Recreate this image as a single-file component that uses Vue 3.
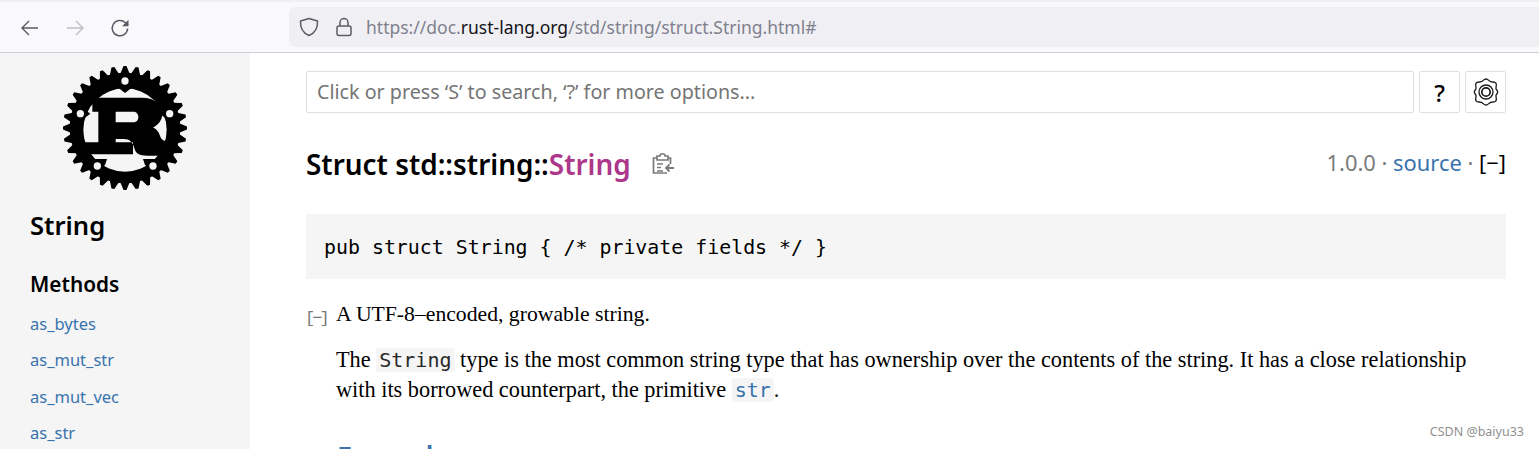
<script setup>
const methods = ['as_bytes', 'as_mut_str', 'as_mut_vec', 'as_str']
const cx = 226, cy = 219, teeth = 32
let d = ''
for (let i = 0; i < teeth; i++) {
  const a = (i / teeth) * Math.PI * 2 - Math.PI / 2
  const step = (Math.PI * 2) / teeth
  const pts = [[a - step * 0.5, 160], [a - step * 0.12, 186], [a + step * 0.12, 186]]
  for (const [t, r] of pts) {
    d += `${i === 0 && t === pts[0][0] ? 'M' : 'L'}${(cx + r * Math.cos(t)).toFixed(1)} ${(cy + r * Math.sin(t)).toFixed(1)}`
  }
}
d += 'Z'
const holes = [[226, 78], [92, 176], [360, 176], [143, 333], [310, 333]]
</script>

<template>
  <div class="page">
    <header class="browser">
      <div class="topstrip"></div>
      <div class="navrow">
        <div class="navbtns">
          <svg class="nav" viewBox="0 0 20 20" width="20" height="20"><path d="M18 10H2M9 3l-7 7 7 7" fill="none" stroke="#5b5b66" stroke-width="1.4"/></svg>
          <svg class="nav" viewBox="0 0 20 20" width="20" height="20"><path d="M2 10h16M11 3l7 7-7 7" fill="none" stroke="#bdbdc3" stroke-width="1.4"/></svg>
          <svg class="nav" viewBox="0 0 20 20" width="20" height="20"><path d="M17.6 10.5a7.7 7.7 0 1 1-2.4-6L18 7" fill="none" stroke="#5b5b66" stroke-width="1.5"/><path d="M18.5 1.8v6.4h-6.4z" fill="#5b5b66"/></svg>
        </div>
        <div class="urlbar">
          <svg viewBox="0 0 20 20" width="20" height="20"><path d="M10 1.5 18.5 4c.4 7-2 11.800-8.500 14.500C3.500 15.800 1.100 11 1.500 4z" fill="none" stroke="#5b5b66" stroke-width="1.500" stroke-linejoin="round"/></svg>
          <svg class="lock" viewBox="0 0 18 20" width="18" height="20"><path d="M5 9V5.500a4 4 0 0 1 8 0V9" fill="none" stroke="#5b5b66" stroke-width="1.500"/><rect x="2" y="9" width="14" height="9.500" rx="2" fill="none" stroke="#5b5b66" stroke-width="1.500"/></svg>
          <span class="url">https://doc.<b>rust-lang.org</b>/std/string/struct.String.html#</span>
        </div>
      </div>
    </header>

    <div class="doc">
      <aside class="sidebar">
        <svg class="logo" viewBox="40 33 372 372" width="124" height="124">
          <path :d="d" fill="#000"/>
          <circle :cx="cx" :cy="cy" r="166" fill="#000"/>
          <circle :cx="cx" cy="225" r="125" fill="#f5f5f5"/>
          <path d="M226 114 198 92H254ZM122 176 88 150V202ZM330 176 364 150V202ZM172 312H130L146 346 166 330ZM280 312H322L306 346 286 330Z" fill="#000"/>
          <path fill-rule="evenodd" fill="#000" d="M128 128H276C318 128 338 150 338 175C338 197 325 210 310 218C322 222 328 232 332 245C336 256 345 260 358 256L376 232L380 290L350 302H292C270 302 258 296 254 280C250 262 240 252 222 252H198V262H250V298H96V262H146V170H128ZM198 170V202H250C260 202 266 196 266 186C266 176 260 170 250 170Z"/>
          <circle v-for="(h, i) in holes" :key="i" :cx="h[0]" :cy="h[1]" r="18" fill="#000"/>
          <circle v-for="(h, i) in holes" :key="'c' + i" :cx="h[0]" :cy="h[1]" r="11" fill="#f5f5f5"/>
        </svg>
        <h2 class="side-title">String</h2>
        <h3 class="side-head">Methods</h3>
        <ul class="side-list">
          <li v-for="m in methods" :key="m"><a>{{ m }}</a></li>
        </ul>
      </aside>

      <main class="content">
        <div class="searchrow">
          <div class="search">Click or press ‘S’ to search, ‘?’ for more options...</div>
          <div class="iconbtn help">?</div>
          <div class="iconbtn">
            <svg viewBox="0 0 28 28" width="28" height="28" fill="none" stroke="#1a1a1a" stroke-width="1.300">
              <path d="M14 1c2.200 0 2.800 2 4.700 2.700 2 .7 4-.3 5.200 1.500 1.200 1.800-.2 3.400.1 5.400.2 1.200 1.700 1.900 1.700 3.400s-1.500 2.200-1.700 3.400c-.3 2 1.100 3.600-.1 5.400-1.200 1.800-3.200.8-5.200 1.500-1.900.7-2.500 2.700-4.700 2.700s-2.800-2-4.700-2.700c-2-.7-4 .3-5.200-1.500-1.200-1.800.2-3.400-.1-5.400-.2-1.200-1.700-1.900-1.700-3.400s1.500-2.200 1.700-3.400c.3-2-1.100-3.600.1-5.400 1.200-1.800 3.200-.8 5.200-1.500C11.200 3 11.800 1 14 1z"/>
              <circle cx="14" cy="14" r="7"/>
              <circle cx="14" cy="14" r="4.200" stroke-width="1.700"/>
            </svg>
          </div>
        </div>

        <div class="titlerow">
          <h1 class="title"><span>Struct std::string::<span class="struct">String</span></span><svg class="clip" viewBox="0 0 24 24" width="24" height="24" fill="none" stroke="#7a7a7a" stroke-width="1.700">
              <path d="M17 6h2.500v6M16 21H2.500V6H6"/>
              <path d="M6 4h3c0-3 5-3 5 0h3v4H6z" fill="none"/>
              <path d="M6 12h6M6 15.500h4M6 19h6"/>
              <path d="M23 16h-8m3.500-3.500L15 16l3.500 3.500" stroke-width="1.800"/>
            </svg></h1>
          <div class="since">1.0.0 · <a>source</a> · <span class="toggle">[−]</span></div>
        </div>

        <pre class="decl">pub struct String { /* private fields */ }</pre>

        <section class="docblock">
          <span class="wrapper">[−]</span>
          <p class="first">A UTF-8–encoded, growable string.</p>
          <p class="second">The <code>String</code> type is the most common string type that has ownership over the contents of the string. It has a close relationship with its borrowed counterpart, the primitive <code class="link">str</code>.</p>
          <h2 class="examples">Examples</h2>
        </section>
      </main>
    </div>

    <div class="mark">CSDN @baiyu33</div>
  </div>
</template>

<style>
html, body { margin: 0; overflow: hidden; background: #fff; }
</style>

<style scoped>
.page { position: relative; width: 1539px; height: 449px; overflow: hidden; font-family: "Noto Sans", sans-serif; color: #000; }
.browser { height: 53px; background: #f9f9fb; border-bottom: 1px solid #cfcfd8; box-sizing: border-box; display: flex; flex-direction: column; }
.topstrip { height: 2px; background: #f0f0f4; }
.navrow { flex: 1; display: flex; align-items: center; padding-left: 20px; }
.navbtns { display: flex; gap: 25px; width: 269px; margin-top: 1px; }
.urlbar { width: 1250px; height: 40px; margin-top: -1px; border-radius: 6px 0 0 6px; background: #f0f0f4; display: flex; align-items: center; padding-left: 10px; box-sizing: border-box; }
.lock { margin-left: 16px; }
.url { margin-left: 13px; font-size: 17.500px; color: #80808e; }
.url b { font-weight: 400; color: #15141a; }
.doc { display: flex; height: 396px; }
.sidebar { width: 250px; flex: none; background: #f5f5f5; box-sizing: border-box; padding: 13px 0 0 30px; }
.logo { display: block; margin-left: 33px; }
.side-title { margin: 18px 0 0; font-size: 25.600px; line-height: 36px; font-weight: 600; }
.side-head { margin: 26px 0 0; font-size: 20.800px; line-height: 28px; font-weight: 600; }
.side-list { list-style: none; margin: 8px 0 0; padding: 0; }
.side-list li { height: 36.400px; line-height: 36.400px; font-size: 16.500px; color: #3873ad; }
.content { flex: 1; padding: 18px 33px 0 56px; min-width: 0; }
.searchrow { display: flex; gap: 5px; height: 42px; }
.search { flex: 1; border: 1px solid #e0e0e0; border-radius: 2px; box-sizing: border-box; line-height: 40px; padding-left: 10px; font-size: 19.700px; color: #757575; }
.iconbtn { width: 41px; border: 1px solid #e0e0e0; border-radius: 2px; box-sizing: border-box; display: flex; align-items: center; justify-content: center; }
.help { font-size: 24px; font-weight: 500; }
.titlerow { display: flex; justify-content: space-between; align-items: center; margin-top: 29px; height: 44px; }
.title { margin: 0; font-size: 27.900px; font-weight: 600; display: flex; align-items: center; }
.struct { color: #ad378a; }
.clip { margin-left: 20px; }
.since { font-size: 21.900px; color: #7a7a7a; margin-top: -4px; }
.since a { color: #3873ad; }
.toggle { color: #000; }
.decl { margin: 28px 0 0; height: 65px; background: #f5f5f5; box-sizing: border-box; padding: 0 18px; line-height: 68px; font-family: "DejaVu Sans Mono", monospace; font-size: 19.900px; }
.docblock { position: relative; padding-left: 31px; font-family: "Liberation Serif", serif; font-size: 21.700px; line-height: 29px; }
.wrapper { position: absolute; left: -1px; top: 6px; font-family: "Liberation Mono", monospace; font-size: 17px; line-height: 26px; color: #7a7a7a; letter-spacing: -3px; }
.first { margin: 21px 0 0 -1px; }
.second { margin: 16px 0 0 -1px; font-size: 22.300px; }
code { font-family: "DejaVu Sans Mono", monospace; font-size: 20px; background: #f5f5f5; border-radius: 3px; padding: 0 3px; color: #2a2a2a; }
code.link { color: #3873ad; }
.examples { margin: 36px 0 0; font-family: "Noto Sans", sans-serif; font-size: 27px; font-weight: 600; color: #3873ad; }
.mark { position: absolute; right: 15px; bottom: 9px; font-size: 12.500px; color: #8f8f8f; background: rgba(255,255,255,.7); }
</style>
